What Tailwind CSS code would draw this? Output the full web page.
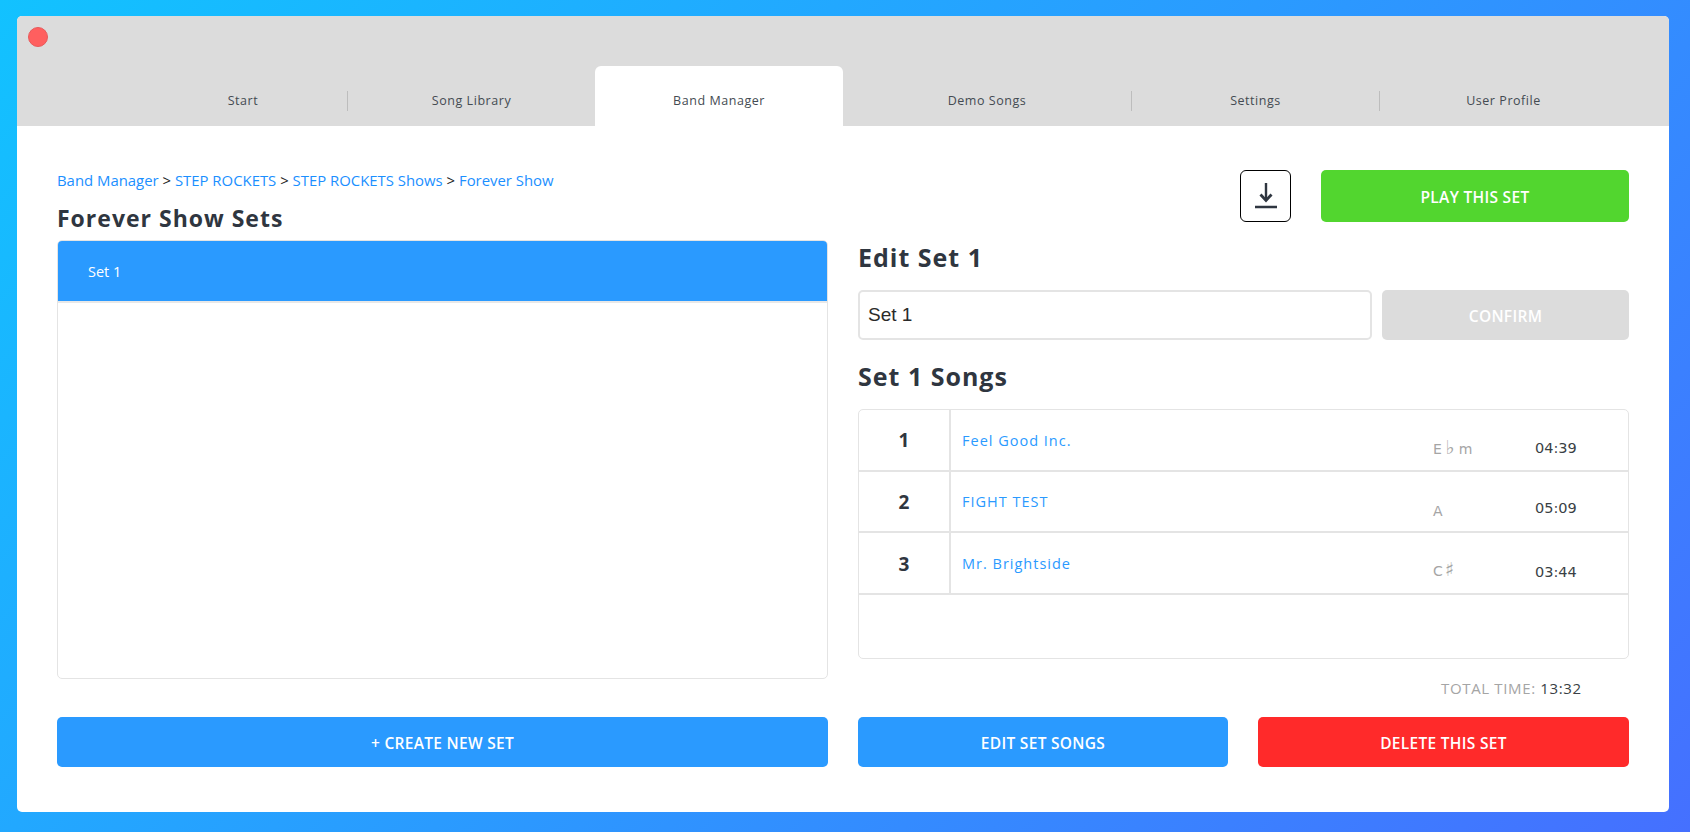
<!DOCTYPE html>
<html lang="en">
<head>
    <meta charset="UTF-8">
    <meta name="viewport" content="width=device-width, initial-scale=1.0">
    <title>Band Manager</title>
    <script src="https://cdn.jsdelivr.net/npm/@tailwindcss/browser@4"></script>
</head>
<body class="h-[832px] overflow-hidden bg-[linear-gradient(135deg,#12c2ff_0%,#2a9bff_50%,#4570ff_100%)] pl-[17px] pr-[21px] pt-[16px] pb-[20px] font-['Open_Sans',sans-serif]">
    <div class="h-[796px] rounded-[5px] bg-white overflow-hidden">
        <!-- Title bar + tabs -->
        <div class="h-[110px] bg-[#dcdcdc] flex flex-col justify-between">
            <div class="pl-[11px] pt-[11px]">
                <div class="w-[20px] h-[20px] rounded-full bg-[#ff5f5f] border border-[#e8595a]"></div>
            </div>
            <div class="h-[60px] flex pl-[122px] text-[12.5px] tracking-[0.55px] text-[#444b52]">
                <div class="w-[208px] h-[60px] pt-[10px] flex items-center justify-center"><span>Start</span></div>
                <div class="w-px h-[20px] mt-[25px] bg-[#bdbdbd]"></div>
                <div class="w-[247px] h-[60px] pt-[10px] flex items-center justify-center"><span>Song Library</span></div>
                <div class="w-[248px] h-[60px] pt-[10px] flex items-center justify-center bg-white rounded-t-[6px]"><span>Band Manager</span></div>
                <div class="w-[288px] h-[60px] pt-[10px] flex items-center justify-center"><span>Demo Songs</span></div>
                <div class="w-px h-[20px] mt-[25px] bg-[#bdbdbd]"></div>
                <div class="w-[247px] h-[60px] pt-[10px] flex items-center justify-center"><span>Settings</span></div>
                <div class="w-px h-[20px] mt-[25px] bg-[#bdbdbd]"></div>
                <div class="w-[247px] h-[60px] pt-[10px] flex items-center justify-center"><span>User Profile</span></div>
            </div>
        </div>

        <div class="pt-[44px] pl-[40px] grid grid-cols-[771px_771px] gap-x-[30px]">
            <!-- Sets column -->
            <div>
                <div class="h-[20px] leading-[20px] text-[14.9px] text-[#222]">
                    <a class="text-[#1b8fff]">Band Manager</a> &gt; <a class="text-[#1b8fff]">STEP ROCKETS</a> &gt; <a class="text-[#1b8fff]">STEP ROCKETS Shows</a> &gt; <a class="text-[#1b8fff]">Forever Show</a>
                </div>
                <h2 class="mt-[10px] h-[36px] leading-[36px] text-[23px] font-bold tracking-[1px] text-[#2f3640]">Forever Show Sets</h2>
                <div class="mt-[4px] h-[439px] rounded-[5px] border border-[#e4e4e4] overflow-hidden">
                    <div class="h-[62px] bg-[#2a9aff] border-b-2 border-[#e8e8e8] flex items-center pl-[30px] pt-[2px] text-[14.5px] text-white">Set 1</div>
                </div>
                <button class="mt-[38px] w-full h-[50px] pt-[3px] rounded-[5px] bg-[#2a9aff] text-white text-[15.5px] font-semibold tracking-[0.3px]">+ CREATE NEW SET</button>
            </div>

            <!-- Edit column -->
            <div>
                <div class="h-[52px] flex justify-end gap-[30px]">
                    <button class="w-[51px] h-[52px] rounded-[6px] border border-black flex items-center justify-center">
                        <svg width="24" height="28" viewBox="0 0 24 28" fill="none" stroke="#2f3640">
                            <path d="M12 1V17" stroke-width="2.4"/>
                            <path d="M6.5 12.5L12 18.5L17.5 12.5" stroke-width="2.8"/>
                            <path d="M1 25H23" stroke-width="2.4"/>
                        </svg>
                    </button>
                    <button class="w-[308px] h-[52px] pt-[3px] rounded-[5px] bg-[#52d62f] text-white text-[15.5px] font-semibold tracking-[0.3px]">PLAY THIS SET</button>
                </div>
                <h2 class="mt-[17px] h-[36px] leading-[36px] text-[25px] font-bold tracking-[1px] text-[#2f3640]">Edit Set 1</h2>
                <div class="mt-[15px] flex gap-[10px]">
                    <input value="Set 1" class="w-[514px] h-[50px] rounded-[5px] border-2 border-[#e4e4e4] pl-[8px] text-[19px] text-[#2a2a2a] font-['Liberation_Sans',sans-serif]">
                    <button class="w-[247px] h-[50px] pt-[3px] rounded-[5px] bg-[#dcdcdc] text-white text-[15.5px] font-semibold tracking-[0.3px]">CONFIRM</button>
                </div>
                <h2 class="mt-[18px] h-[36px] leading-[36px] text-[25px] font-bold tracking-[1px] text-[#2f3640]">Set 1 Songs</h2>
                <div class="mt-[15px] h-[250px] rounded-[5px] border border-[#e4e4e4]">
                    <div class="h-[62px] flex items-center border-b-2 border-[#e4e4e4]">
                        <div class="w-[92px] h-full shrink-0 border-r-2 border-[#e4e4e4] pt-[1px] flex items-center justify-center text-[19px] font-bold text-[#2f3640]">1</div>
                        <a class="ml-[11px] mt-[1px] w-[471px] text-[14.5px] tracking-[1px] text-[#2a9aff]">Feel Good Inc.</a>
                        <span class="w-[102px] mt-[15px] leading-[20px] text-[14px] text-[#a5a5a5] font-['DejaVu_Sans',sans-serif]">E<span class="mx-[4px] text-[19px] leading-[20px]">♭</span>m</span>
                        <span class="mt-[18px] text-[14.5px] text-[#3a3f45] font-['DejaVu_Sans',sans-serif]">04:39</span>
                    </div>
                    <div class="h-[61px] flex items-center border-b-2 border-[#e4e4e4]">
                        <div class="w-[92px] h-full shrink-0 border-r-2 border-[#e4e4e4] pt-[2px] flex items-center justify-center text-[19px] font-bold text-[#2f3640]">2</div>
                        <a class="ml-[11px] w-[471px] text-[14.5px] tracking-[1px] text-[#2a9aff]">FIGHT TEST</a>
                        <span class="w-[102px] mt-[18px] leading-[20px] text-[14px] text-[#a5a5a5] font-['DejaVu_Sans',sans-serif]">A</span>
                        <span class="mt-[15px] text-[14.5px] text-[#3a3f45] font-['DejaVu_Sans',sans-serif]">05:09</span>
                    </div>
                    <div class="h-[62px] flex items-center border-b-2 border-[#e4e4e4]">
                        <div class="w-[92px] h-full shrink-0 border-r-2 border-[#e4e4e4] pt-[2px] flex items-center justify-center text-[19px] font-bold text-[#2f3640]">3</div>
                        <a class="ml-[11px] mt-[1px] w-[471px] text-[14.5px] tracking-[1px] text-[#2a9aff]">Mr. Brightside</a>
                        <span class="w-[102px] mt-[14px] leading-[20px] text-[14px] text-[#a5a5a5] font-['DejaVu_Sans',sans-serif]">C<span class="ml-[2px] text-[19px] leading-[20px]">♯</span></span>
                        <span class="mt-[20px] text-[14.5px] text-[#3a3f45] font-['DejaVu_Sans',sans-serif]">03:44</span>
                    </div>
                </div>
                <div class="mt-[19px] h-[20px] leading-[20px] pl-[583px] text-[15px] tracking-[0.65px] text-[#a5a5a5]">TOTAL TIME: <span class="text-[#3a3f45]">13:32</span></div>
                <div class="mt-[19px] flex justify-between">
                    <button class="w-[370px] h-[50px] pt-[3px] rounded-[5px] bg-[#2a9aff] text-white text-[15.5px] font-semibold tracking-[0.3px]">EDIT SET SONGS</button>
                    <button class="w-[371px] h-[50px] pt-[3px] rounded-[5px] bg-[#ff2a2a] text-white text-[15.5px] font-semibold tracking-[0.3px]">DELETE THIS SET</button>
                </div>
            </div>
        </div>
    </div>
</body>
</html>
